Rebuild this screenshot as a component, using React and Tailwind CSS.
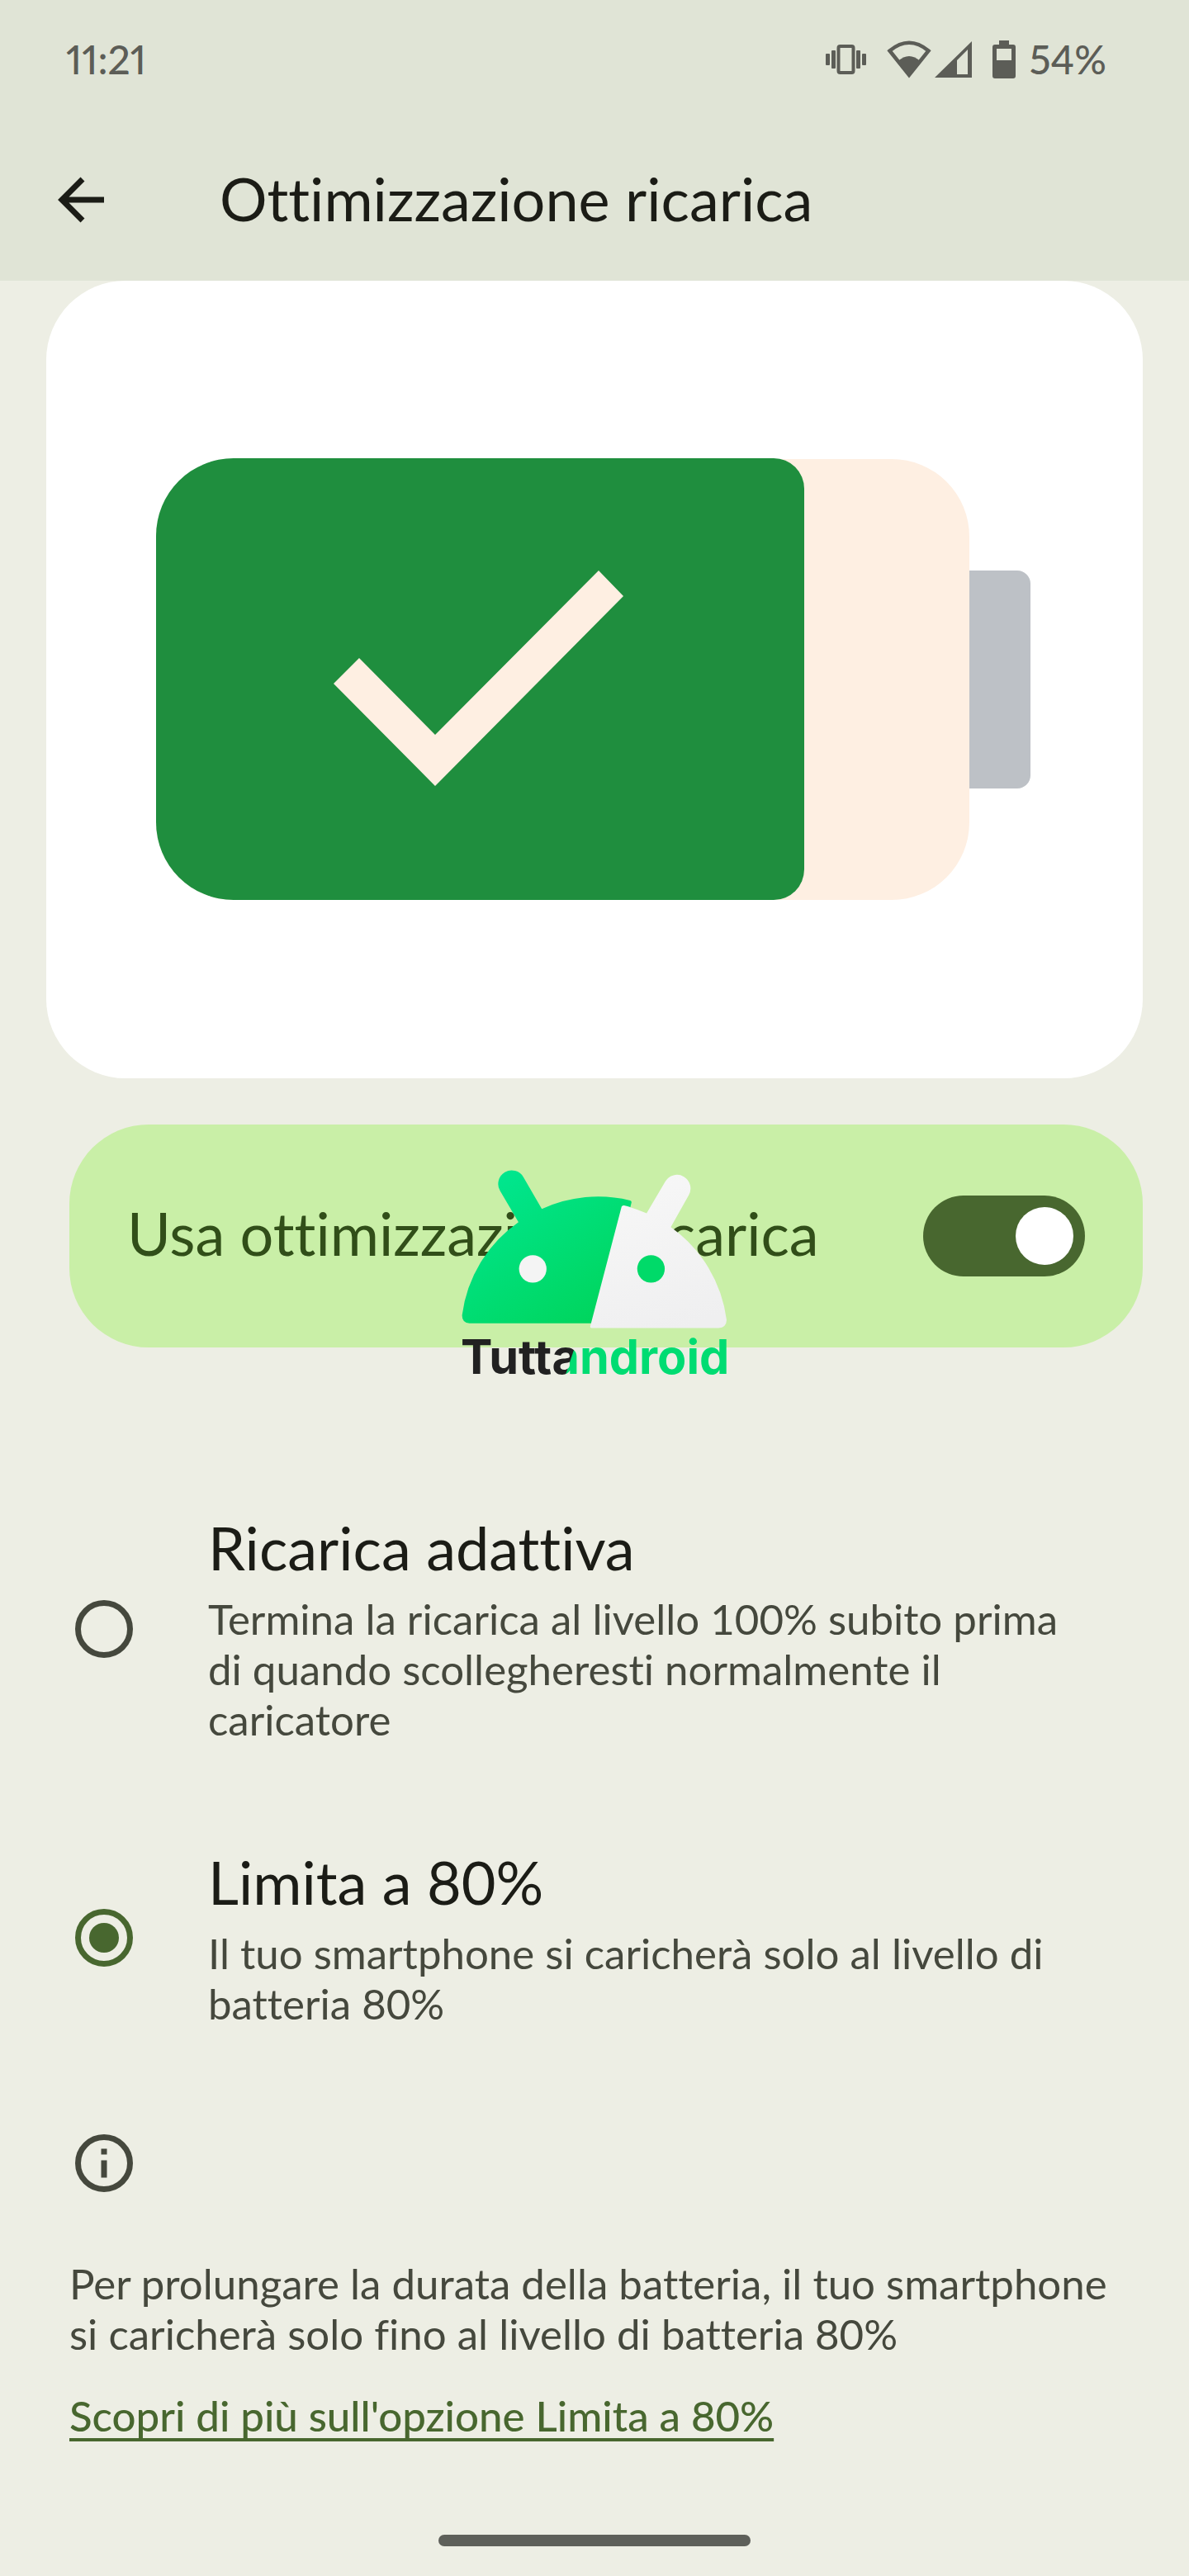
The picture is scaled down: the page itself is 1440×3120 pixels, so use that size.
import { useState } from "react";

const OPTIONS = [
  {
    id: "adaptive",
    title: "Ricarica adattiva",
    description:
      "Termina la ricarica al livello 100% subito prima di quando scollegheresti normalmente il caricatore",
  },
  {
    id: "limit",
    title: "Limita a 80%",
    description:
      "Il tuo smartphone si caricherà solo al livello di batteria 80%",
  },
];

function StatusBar() {
  return (
    <div className="h-36 pl-20 pr-25 flex items-center justify-between text-[48px] leading-none font-medium proportional-nums text-[#5c5d57]">
      <span>11:21</span>

      <div className="flex items-center">
        {/* Vibrate */}
        <svg width="50" height="38" viewBox="0 0 50 38" fill="currentColor" className="mr-6">
          <rect x="0" y="12" width="5" height="14" rx="1" />
          <rect x="7" y="8" width="5" height="22" rx="1" />
          <rect x="15.5" y="3" width="18" height="32" rx="2" fill="none" stroke="currentColor" strokeWidth="4" />
          <rect x="37" y="8" width="5" height="22" rx="1" />
          <rect x="44" y="12" width="5" height="14" rx="1" />
        </svg>
        {/* Wifi */}
        <svg width="54" height="46" viewBox="0 0 54 46" fill="none" className="mr-1">
          <path d="M3.5 12.5Q27 -7 50.5 12.5L27 42Z" stroke="currentColor" strokeWidth="4.5" />
          <path d="M13.5 25Q27 13 40.5 25L27 44Z" fill="currentColor" />
        </svg>
        {/* Mobile signal */}
        <svg width="46" height="46" viewBox="0 0 46 46" fill="currentColor" className="mr-6">
          <path fillRule="evenodd" d="M0 45H45V1ZM27 24L40 11V41H27Z" />
        </svg>
        {/* Battery */}
        <svg width="28" height="46" viewBox="0 0 28 46" fill="currentColor" className="mr-4">
          <path fillRule="evenodd" d="M8 0H20V5H25Q28 5 28 8V43Q28 46 25 46H3Q0 46 0 43V8Q0 5 3 5H8ZM5 10V24H23V10Z" />
        </svg>
        <span>54%</span>
      </div>
    </div>
  );
}

function BatteryIllustration() {
  return (
    <svg viewBox="0 0 1328 966" className="block w-full" aria-hidden="true">
      <rect x="1090" y="351" width="102" height="264" rx="16" fill="#bdc1c6" />
      <rect x="133" y="216" width="985" height="534" rx="94" fill="#feefe2" />
      <path
        d="M227 215H881A37 37 0 0 1 918 252V713A37 37 0 0 1 881 750H227A94 94 0 0 1 133 656V309A94 94 0 0 1 227 215Z"
        fill="#1f8e3e"
      />
      <path d="M348 488L379 457L471 550L669 351L699 382L471 612Z" fill="#feefe2" />
    </svg>
  );
}

function TuttoAndroidLogo() {
  return (
    <svg viewBox="100 100 1000 800" className="w-[333px] overflow-visible">
      <defs>
        <linearGradient id="headGreen" gradientUnits="userSpaceOnUse" x1="260" y1="130" x2="640" y2="680">
          <stop offset="0" stopColor="#00e68e" />
          <stop offset="1" stopColor="#00d45a" />
        </linearGradient>
        <linearGradient id="headWhite" gradientUnits="userSpaceOnUse" x1="720" y1="150" x2="900" y2="690">
          <stop offset="0" stopColor="#f7f7f7" />
          <stop offset="1" stopColor="#efeff0" />
        </linearGradient>
        <linearGradient id="wordmark" gradientUnits="userSpaceOnUse" x1="508" y1="808" x2="511" y2="809">
          <stop offset="0" stopColor="#212121" />
          <stop offset="1" stopColor="#00dc72" />
        </linearGradient>
      </defs>
      <path
        d="M144 670Q116 668 117 640A490 490 0 0 1 322 302L255 188A49 49 0 0 1 340 138L407 254A490 490 0 0 1 728 223Q734 225 733 231L729 247L650 670Z"
        fill="url(#headGreen)"
      />
      <path
        d="M583 681L697 246Q699 240 706 241A490 490 0 0 1 788 270L856 154A49 49 0 0 1 941 204L876 320A490 490 0 0 1 1079 658Q1078 686 1050 687H588Q582 686 583 681Z"
        fill="url(#headWhite)"
      />
      <circle cx="374" cy="472" r="50" fill="#f4f4f4" />
      <circle cx="804" cy="472" r="50" fill="#00da69" />
      <text x="112" y="855" fontSize="173" className="font-[Inter,sans-serif] font-bold" fill="url(#wordmark)">
        Tuttandroid
      </text>
    </svg>
  );
}

export default function App() {
  const [enabled, setEnabled] = useState(true);
  const [selected, setSelected] = useState("limit");

  return (
    <div className="min-h-screen flex flex-col bg-[#edeee4] font-[Lato,sans-serif] [font-variant-ligatures:none] text-[#1b1c16]">
      <header className="bg-[#e0e4d6]">
        <StatusBar />
        <div className="h-49 pl-[70px] flex items-center">
          <button type="button" aria-label="Indietro" className="mr-35">
            <svg width="56" height="56" viewBox="0 0 56 56" fill="none" stroke="currentColor" strokeWidth="7">
              <path d="M30 3L5 28L30 53M5 28H56" />
            </svg>
          </button>
          <h1 className="pb-1 text-[72px] leading-none">Ottimizzazione ricarica</h1>
        </div>
      </header>

      <main className="flex-1 px-14">
        <div className="rounded-[96px] bg-white">
          <BatteryIllustration />
        </div>

        {/* Main switch */}
        <div className="relative mt-14 ml-7 px-[70px] py-[86px] rounded-[96px] bg-[#c9efa7] flex items-center justify-between">
          <label htmlFor="optimize" className="pb-2 text-[72px] leading-none text-[#314e19]">
            Usa ottimizzazione ricarica
          </label>
          <input
            id="optimize"
            type="checkbox"
            role="switch"
            checked={enabled}
            onChange={(e) => setEnabled(e.target.checked)}
            className="appearance-none shrink-0 w-49 h-[98px] p-3.5 rounded-full flex bg-[#8d917f] checked:bg-[#48672f] before:size-[70px] before:rounded-full before:bg-white checked:before:ml-auto"
          />
          <div className="absolute top-[51px] left-[470px] pointer-events-none">
            <TuttoAndroidLogo />
          </div>
        </div>

        {/* Charging modes */}
        <fieldset className="mt-35 ml-7">
          {OPTIONS.map((option) => (
            <label key={option.id} className="flex items-center pt-15 pb-16 pl-[7px] pr-20">
              <input
                type="radio"
                name="mode"
                checked={selected === option.id}
                onChange={() => setSelected(option.id)}
                className="appearance-none shrink-0 size-[70px] mr-[91px] rounded-full border-7 border-[#45483d] checked:border-[#48672f] grid place-items-center before:size-9 before:rounded-full checked:before:bg-[#48672f]"
              />
              <span>
                <span className="block text-[72px] leading-[84px]">{option.title}</span>
                <span className="block mt-3.5 text-[51px] leading-[61px] text-[#45483d]">
                  {option.description}
                </span>
              </span>
            </label>
          ))}
        </fieldset>

        <section className="mt-16 ml-7 text-[51px] leading-[61px] text-[#45483d]">
          <svg width="70" height="70" viewBox="0 0 70 70" fill="none" stroke="currentColor" strokeWidth="7" className="ml-[7px]">
            <circle cx="35" cy="35" r="31.5" />
            <path d="M35 17.5V24.5M35 31.5V52.5" />
          </svg>
          <p className="mt-20 pr-4">
            Per prolungare la durata della batteria, il tuo smartphone si caricherà solo fino al livello di batteria 80%
          </p>
          <a
            href="#limite"
            className="inline-block mt-[38px] font-medium text-[#48672f] underline decoration-4 underline-offset-8 [text-decoration-skip-ink:none]"
          >
            Scopri di più sull'opzione Limita a 80%
          </a>
        </section>
      </main>

      {/* Gesture bar */}
      <div className="mb-9 mx-auto w-[378px] h-3.5 rounded-full bg-[#5e605a]" />
    </div>
  );
}
